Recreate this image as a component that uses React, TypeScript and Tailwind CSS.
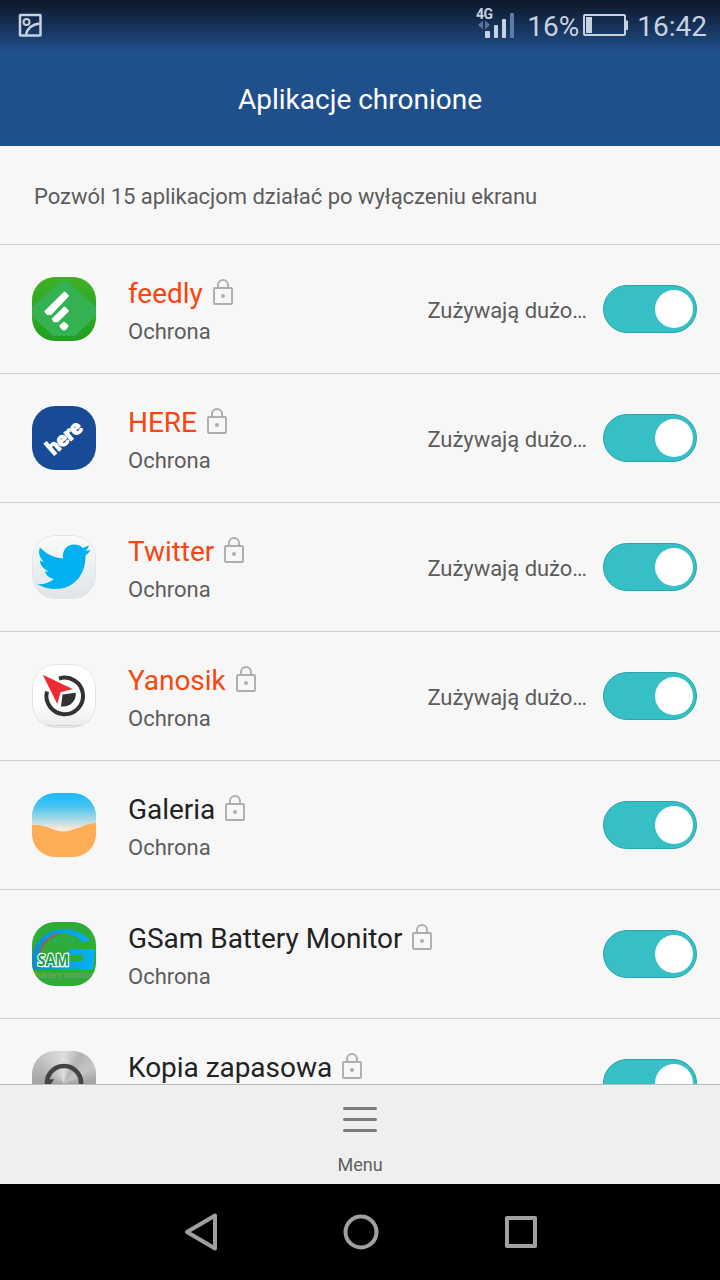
import type { ReactNode } from "react"

type AppEntry = {
  name: string
  icon: ReactNode
  heavy?: boolean
}

function FeedlyIcon() {
  return (
    <svg viewBox="0 0 64 64" className="size-full">
      <defs>
        <linearGradient id="feedly-bg" x1="0" y1="0" x2="0" y2="1">
          <stop offset="0" stopColor="#3fb024" />
          <stop offset="1" stopColor="#20a020" />
        </linearGradient>
      </defs>
      <rect width="64" height="64" fill="url(#feedly-bg)" />
      <path d="M28 4.500Q32 1 36 4.500L64 30V39L44 58Q43 59 41 59H23Q21 59 20 58L0 39V30Z" fill="#34b252" />
      <g fill="#fff" stroke="#fff" strokeWidth="2.400" strokeLinejoin="round">
        <path d="M32.500 15.800L35.600 18.800L18.500 36.800H15.500L13.600 34.500Z" />
        <path d="M32.500 30.800L35.600 33.800L25.500 44H22.500L21 42Z" />
        <path d="M32 46L35.400 49L33 52H31L28.600 49Z" />
      </g>
    </svg>
  )
}

function HereIcon() {
  return (
    <svg viewBox="0 0 64 64" className="size-full">
      <rect width="64" height="64" fill="#184a96" />
      <text
        x="0"
        y="6"
        transform="translate(32.500 32) rotate(-41)"
        textAnchor="middle"
        textLength="40"
        lengthAdjust="spacingAndGlyphs"
        fontFamily="Lato, sans-serif"
        fontWeight="900"
        fontSize="20"
        fill="#fff"
        stroke="#fff"
        strokeWidth="1.300"
      >
        here
      </text>
    </svg>
  )
}

function TwitterIcon() {
  return (
    <svg viewBox="0 0 64 64" className="size-full">
      <defs>
        <linearGradient id="twitter-bg" x1="0" y1="0" x2="0" y2="1">
          <stop offset="0" stopColor="#fafafa" />
          <stop offset="1" stopColor="#dfe5e8" />
        </linearGradient>
      </defs>
      <rect x="0.500" y="0.500" width="63" height="63" rx="22.500" fill="url(#twitter-bg)" stroke="#e2e6e8" />
      <path
        d="M5 49C11 50 17 48 22 44C17 43 14 40 13 36.500H17C11 34 8 30 8 25.500L12 27C7 22 6 17 8 12.500C14 19 21 22.500 31 23.500C30 15 35 9.500 42 9.500C46 9.500 48.500 10.500 51 13L57 10.500C56 13 55 14.500 53.500 16L58.500 15C57 17.500 55.500 19 53.500 20.500C54 39 42 54 24 54C17 54 10 52 5 49Z"
        fill="#00b0f0"
      />
    </svg>
  )
}

function YanosikIcon() {
  return (
    <svg viewBox="0 0 64 64" className="size-full">
      <defs>
        <linearGradient id="yanosik-bg" x1="0" y1="0" x2="0" y2="1">
          <stop offset="0.600" stopColor="#ffffff" />
          <stop offset="1" stopColor="#e9e9e9" />
        </linearGradient>
      </defs>
      <rect x="0.500" y="0.500" width="63" height="63" rx="22.500" fill="url(#yanosik-bg)" stroke="#e2e2e2" />
      <path d="M14 61.500H50" stroke="#d4d4d4" />
      <path d="M27 14.600A18.300 18.300 0 1 1 15 27.500" fill="none" stroke="#333" strokeWidth="4" />
      <path d="M30.500 30.500L43.800 28.800C44.500 37 38 43.500 29 42.500Z" fill="#333" />
      <path
        d="M10.700 10.700L40.700 25L28.500 28.200L25.300 40Z"
        fill="#ee2b33"
        stroke="#fff"
        strokeWidth="2.500"
        paintOrder="stroke"
      />
    </svg>
  )
}

function GalleryIcon() {
  return (
    <svg viewBox="0 0 64 64" className="size-full">
      <defs>
        <linearGradient id="gallery-sky" x1="0" y1="0" x2="0" y2="1">
          <stop offset="0" stopColor="#18bbff" />
          <stop offset="0.200" stopColor="#45c3f0" />
          <stop offset="0.440" stopColor="#b5dde3" />
          <stop offset="0.560" stopColor="#fae8db" />
        </linearGradient>
      </defs>
      <rect width="64" height="64" fill="url(#gallery-sky)" />
      <path d="M0 32C16 31 20 38.500 31 38.500C43 38.500 50 31 64 30V64H0Z" fill="#fcad55" />
    </svg>
  )
}

function GSamIcon() {
  return (
    <svg viewBox="0 0 64 64" className="size-full">
      <defs>
        <linearGradient id="gsam-blue" x1="0" y1="0" x2="1" y2="0">
          <stop offset="0" stopColor="#0d8fc4" />
          <stop offset="1" stopColor="#08b2f5" />
        </linearGradient>
      </defs>
      <rect width="64" height="64" fill="#2eac38" />
      <path
        d="M0 48V34C3 17 16 7 32 7C43 7 52 11 58 19L50 20C45 14 38 11.500 31 11.500C18 11.500 9 20 7.500 35L10 39H51V33H37V27H63L61 48Z"
        fill="url(#gsam-blue)"
      />
      <path d="M8 32C9 23 16 15 27 12" fill="none" stroke="#c34a48" strokeWidth="1.500" />
      <circle cx="24" cy="19" r="1.600" fill="#1ba9bd" />
      <circle cx="40" cy="19" r="1.600" fill="#1ba9bd" />
      <text
        x="5.500"
        y="44"
        textLength="31.500"
        lengthAdjust="spacingAndGlyphs"
        fontFamily="'Open Sans', sans-serif"
        fontWeight="700"
        fontSize="16"
        fill="#19a051"
        stroke="#fff"
        strokeWidth="2.400"
        paintOrder="stroke"
      >
        SAM
      </text>
      <text
        x="3"
        y="55.500"
        textLength="58"
        lengthAdjust="spacingAndGlyphs"
        fontFamily="'Open Sans', sans-serif"
        fontWeight="600"
        fontSize="8"
        fill="#7c9c80"
      >
        battery monitor
      </text>
    </svg>
  )
}

function BackupIcon() {
  return (
    <div className="size-full bg-[conic-gradient(#dedede,#b4b4b4_30deg,#c6c6c6_60deg,#a2a2a2_90deg,#c0c0c0_180deg,#a2a2a2_270deg,#bdbdbd_310deg,#cfcfcf_335deg,#dedede)]">
      <svg viewBox="0 0 64 64" className="size-full">
        <path d="M15.500 36A17 17 0 1 1 48.500 36" fill="none" stroke="#444" strokeWidth="4.500" />
        <path d="M13 29L22 28L18 35Z" fill="#444" />
      </svg>
    </div>
  )
}

const APPS: AppEntry[] = [
  { name: "feedly", icon: <FeedlyIcon />, heavy: true },
  { name: "HERE", icon: <HereIcon />, heavy: true },
  { name: "Twitter", icon: <TwitterIcon />, heavy: true },
  { name: "Yanosik", icon: <YanosikIcon />, heavy: true },
  { name: "Galeria", icon: <GalleryIcon /> },
  { name: "GSam Battery Monitor", icon: <GSamIcon /> },
  { name: "Kopia zapasowa", icon: <BackupIcon /> },
]

function LockIcon() {
  return (
    <svg viewBox="0 0 20 26" className="mb-1 h-[26px] w-5 shrink-0" fill="none" stroke="#aeaeae" strokeWidth="1.900">
      <rect x="1" y="9" width="18" height="16" rx="1" />
      <path d="M5 9V6A5 5 0 0 1 15 6V9" />
      <circle cx="10" cy="17" r="2" fill="#aeaeae" stroke="none" />
    </svg>
  )
}

function Toggle() {
  return (
    <button
      role="switch"
      aria-checked="true"
      className="flex h-12 w-[94px] shrink-0 items-center justify-end rounded-full border border-[#2ba6ac] bg-[#36c0c6] pr-[3px]"
    >
      <span className="size-[38px] rounded-full bg-white" />
    </button>
  )
}

function AppRow({ app }: { app: AppEntry }) {
  return (
    <li className="flex h-[129px] shrink-0 items-center border-t border-[#d0d0d0] pr-[23px] pl-8">
      <div className="size-16 shrink-0 overflow-hidden rounded-[23px]">{app.icon}</div>
      <div className="ml-8 flex-1 pt-2">
        <div className="flex h-[38px] items-center gap-[10px]">
          <span
            className={`text-[28px] leading-[38px] tracking-[-0.04px] whitespace-nowrap ${app.heavy ? "text-[#f9450f]" : "text-[#222]"}`}
          >
            {app.name}
          </span>
          <LockIcon />
        </div>
        <div className="text-[22px] leading-[38px] text-[#5c5c5c]">Ochrona</div>
      </div>
      {app.heavy && (
        <span className="mt-[3px] mr-4 text-[22px] tracking-[-0.04px] whitespace-nowrap text-[#5c5c5c]">Zużywają dużo…</span>
      )}
      <Toggle />
    </li>
  )
}

function StatusBar() {
  return (
    <div className="flex h-[52px] items-center bg-linear-to-b from-[#0d1b31] from-8% to-[#20508c] pr-[13px] pl-[18px] text-[#c8d1df]">
      <svg viewBox="0 0 24 24" className="mr-auto mb-[3px] size-6" fill="none" stroke="#c8d1df" strokeWidth="2.500">
        <rect x="2" y="2" width="20.500" height="20.500" rx="0.500" />
        <circle cx="8.500" cy="9" r="3" strokeWidth="2" />
        <path d="M8 21.500C9.500 15 14 11.500 21.500 10.500" />
      </svg>
      <svg viewBox="0 0 42 32" className="mr-[10px] mb-2 h-8 w-[42px]" fill="#c8d1df">
        <text x="1" y="13" fontFamily="Roboto, sans-serif" fontWeight="700" fontSize="14" textLength="17">
          4G
        </text>
        <path d="M3 19L8 14.500V23.500ZM15 19L10 14.500V23.500Z" fill="#5c7290" />
        <rect x="10" y="25" width="5" height="7" rx="1" />
        <rect x="19" y="19" width="4" height="13" rx="1" />
        <rect x="27" y="13" width="4" height="19" rx="1" />
        <rect x="35" y="7" width="4" height="25" rx="1" fill="#5b7ba8" />
      </svg>
      <span className="pt-px text-[28px] leading-none">16%</span>
      <svg viewBox="0 0 46 23" className="mx-1 mb-[2px] h-[23px] w-[46px]" fill="none" stroke="#c8d1df" strokeWidth="2">
        <rect x="1" y="1" width="41" height="20" rx="1" />
        <rect x="3" y="3" width="6" height="16" fill="#c8d1df" stroke="none" />
        <path d="M44 6.500V16" />
      </svg>
      <span className="ml-1 pt-px text-[28px] leading-none">16:42</span>
    </div>
  )
}

function MenuBar() {
  return (
    <div className="flex h-[100px] shrink-0 flex-col items-center border-t border-[#bdbdbd] bg-[#efefef] pt-[21px]">
      <svg viewBox="0 0 34 27" className="h-[27px] w-[34px]" stroke="#7b7b7b" strokeWidth="3" strokeLinecap="round">
        <path d="M1.500 2.500H32.500M1.500 13.500H32.500M1.500 24.500H32.500" />
      </svg>
      <span className="mt-[21px] text-[18px] leading-[22px] text-[#5f5f5f]">Menu</span>
    </div>
  )
}

function NavBar() {
  return (
    <div className="flex h-24 shrink-0 items-center justify-center bg-black">
      <svg viewBox="0 0 354 40" className="h-10 w-[354px]" fill="none" stroke="#a0a0a0" strokeWidth="4" strokeLinejoin="round">
        <path d="M4 20L32 3.500V36.500Z" />
        <circle cx="178" cy="20" r="15.500" />
        <rect x="324" y="6" width="28" height="28" />
      </svg>
    </div>
  )
}

export default function App() {
  return (
    <div className="flex h-[1280px] w-[720px] flex-col overflow-hidden bg-[#f7f7f7] font-[Roboto,sans-serif]">
      <header className="h-[146px] shrink-0 bg-[#20508c]">
        <StatusBar />
        <h1 className="pt-[29px] text-center text-[28px] leading-[38px] text-white">Aplikacje chronione</h1>
      </header>
      <p className="h-[98px] shrink-0 px-[34px] pt-9 text-[22px] leading-[30px] tracking-[-0.04px] text-[#5c5c5c]">
        Pozwól 15 aplikacjom działać po wyłączeniu ekranu
      </p>
      <ul className="flex min-h-0 flex-1 flex-col overflow-hidden">
        {APPS.map((app) => <AppRow key={app.name} app={app} />)}
      </ul>
      <MenuBar />
      <NavBar />
    </div>
  )
}
